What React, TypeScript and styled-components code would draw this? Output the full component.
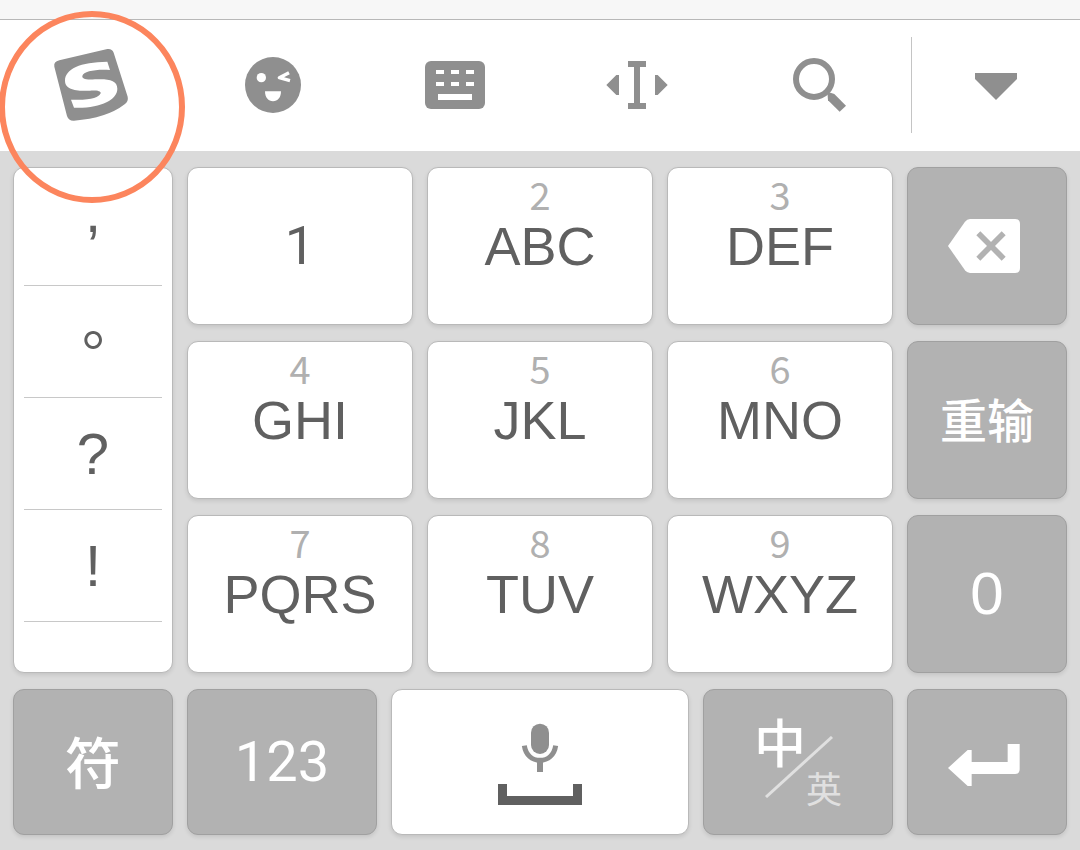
import React from "react";
import styled, { createGlobalStyle } from "styled-components";

const colors = {
  board: "#dadada",
  dark: "#b2b2b2",
  ink: "#606060",
  icon: "#8f8f8f",
  hint: "#b0b0b0",
  ring: "#fc855d",
};

const GlobalStyle = createGlobalStyle`
  *, *::before, *::after { box-sizing: border-box; }
  body {
    margin: 0;
    background: ${colors.board};
    font-family: "Liberation Sans", "Noto Sans CJK SC", sans-serif;
  }
  button {
    margin: 0;
    padding: 0;
    border: 0;
    background: none;
    font: inherit;
    color: inherit;
    cursor: pointer;
  }
  svg { display: block; flex: none; }
`;

const Keyboard = styled.main`
  display: flex;
  flex-direction: column;
  min-height: 100vh;
  overflow: hidden;
`;

const TopStrip = styled.div`
  height: 20px;
  background: #f7f7f7;
  border-bottom: 1px solid #b8b8b8;
`;

const Toolbar = styled.div`
  display: flex;
  align-items: stretch;
  height: 131px;
  background: #fff;
`;

const Tool = styled.button<{ $grow?: number }>`
  position: relative;
  display: flex;
  flex: ${(p) => p.$grow ?? 182} 1 0;
  align-items: center;
  justify-content: center;
  padding-bottom: 2px;
`;

const Divider = styled.div`
  width: 1px;
  margin: 17px 0 18px 1px;
  background: #c4c4c4;
`;

const Ring = styled.svg`
  position: absolute;
  z-index: 2;
  top: -11px;
  left: 50%;
  margin-left: -94px;
  pointer-events: none;
`;

const Board = styled.div`
  display: flex;
  flex: 1;
  flex-direction: column;
  gap: 16px;
  padding: 16px 13px 15px;
  background: ${colors.board};
`;

const MainKeys = styled.div`
  display: grid;
  grid-template-columns: minmax(0, 160fr) repeat(3, minmax(0, 226fr)) minmax(0, 160fr);
  grid-auto-rows: minmax(158px, auto);
  gap: 16px 14px;
`;

const BottomKeys = styled.div`
  display: grid;
  grid-template-columns:
    minmax(0, 160fr) minmax(0, 190fr) minmax(0, 298fr)
    minmax(0, 190fr) minmax(0, 160fr);
  grid-auto-rows: minmax(146px, auto);
  gap: 14px;
`;

const Key = styled.button<{ $dark?: boolean }>`
  display: flex;
  align-items: center;
  justify-content: center;
  border: 1px solid ${(p) => (p.$dark ? "#a0a0a0" : "#b9b9b9")};
  border-radius: 11px;
  background: ${(p) => (p.$dark ? colors.dark : "#fff")};
  color: ${(p) => (p.$dark ? "#fff" : colors.ink)};
  box-shadow: 0 2px 4px rgba(0, 0, 0, 0.1);
`;

const LetterKey = styled(Key)`
  flex-direction: column;
  justify-content: flex-start;
  padding-top: 10px;
`;

const Hint = styled.span`
  height: 40px;
  font-family: "Noto Sans CJK SC", sans-serif;
  font-size: 38px;
  line-height: 32px;
  color: ${colors.hint};
`;

const Letters = styled.span<{ $digit?: boolean }>`
  font-family: ${(p) => (p.$digit ? "Roboto" : '"Liberation Sans"')}, sans-serif;
  font-size: 54px;
  line-height: 56px;
`;

const Digits = styled.span`
  font-family: Roboto, sans-serif;
  font-size: 56px;
  line-height: 64px;
`;

const Zero = styled.span`
  font-size: 60px;
  line-height: 64px;
`;

const Hanzi = styled.span<{ $size: number }>`
  padding-bottom: 4px;
  font-family: "Noto Sans CJK SC", sans-serif;
  font-size: ${(p) => p.$size}px;
  font-weight: 500;
  line-height: 64px;
`;

const Punctuation = styled.div`
  grid-row: span 3;
  padding: 6px 10px 0;
  border: 1px solid #b9b9b9;
  border-radius: 11px;
  background: #fff;
  box-shadow: 0 2px 4px rgba(0, 0, 0, 0.1);
`;

const Mark = styled.button<{ $raised?: boolean }>`
  display: flex;
  align-items: center;
  justify-content: center;
  width: 100%;
  height: 112px;
  padding-bottom: ${(p) => (p.$raised ? 36 : 0)}px;
  border-bottom: 1px solid #c8c8c8;
  font-family: "Liberation Sans", "Noto Sans CJK TC", sans-serif;
  font-size: 58px;
  line-height: 64px;
  color: ${colors.ink};
`;

const LanguageSwitch = styled.span`
  position: relative;
  display: flex;
  flex-direction: column;
  width: 88px;
  height: 92px;
  font-family: "Noto Sans CJK SC", sans-serif;
`;

const Slash = styled.svg`
  position: absolute;
  top: 20px;
  left: 11px;
`;

const Chinese = styled.span`
  align-self: flex-start;
  font-size: 52px;
  font-weight: 500;
  line-height: 50px;
`;

const English = styled.span`
  align-self: flex-end;
  font-size: 36px;
  line-height: 42px;
  color: #e0e0e0;
`;

const LogoIcon = () => (
  <svg width="82" height="80" viewBox="150 135 246 240" aria-hidden="true">
    <path
      fill={colors.icon}
      d="M178 181L322 147Q336 145 341 158L383 290Q386 304 374 313Q320 355 222 362Q206 363 201 348L163 200Q160 185 178 181Z"
    />
    <path
      fill="#fff"
      d="M322 185C240 186 195 207 195 242C195 272 238 273 270 272C291 271 303 273 302 280C298 293 268 302 213 299L222 323C300 326 352 300 352 266C352 240 325 236 285 238C255 240 246 236 247 228C250 213 290 207 330 210Z"
    />
  </svg>
);

const SmileyIcon = () => (
  <svg width="56" height="56" viewBox="45 50 168 168" aria-hidden="true">
    <circle cx="129" cy="134" r="84" fill={colors.icon} />
    <circle cx="94" cy="112" r="14" fill="#fff" />
    <path d="M177 97L148 112L180 121" fill="none" stroke="#fff" strokeWidth="10" strokeLinejoin="round" />
    <path d="M105 153H153C153 172 143 183 129 183S105 172 105 153Z" fill="#fff" />
  </svg>
);

const KeyboardIcon = () => (
  <svg width="60" height="48" viewBox="0 0 60 48" aria-hidden="true">
    <rect width="60" height="48" rx="6" fill={colors.icon} />
    <path
      fill="#fff"
      d="M11 9h8v4h-8zM26 9h8v4h-8zM41 9h8v4h-8zM11 21h8v4h-8zM26 21h8v4h-8zM41 21h8v4h-8zM13 33h34v6H13z"
    />
  </svg>
);

const CursorIcon = () => (
  <svg width="62" height="48" viewBox="48 63 186 144" aria-hidden="true">
    <path
      fill={colors.icon}
      d="M49 135L79 105H87V165H79ZM233 135L203 105H195V165H203ZM114 63H168V81H150V189H168V207H114V189H132V81H114Z"
    />
  </svg>
);

const SearchIcon = () => (
  <svg width="53" height="54" viewBox="609 54 159 162" aria-hidden="true">
    <circle cx="672" cy="117" r="54" fill="none" stroke={colors.icon} strokeWidth="18" />
    <path fill={colors.icon} d="M712 155L733 162L768 197L749 215L714 181Z" />
  </svg>
);

const CollapseIcon = () => (
  <svg width="42" height="31" viewBox="0 -4 42 31" aria-hidden="true">
    <path fill={colors.icon} d="M0 0H42V6L21 27L0 6Z" />
  </svg>
);

const BackspaceIcon = () => (
  <svg width="78" height="54" viewBox="174 657 234 162" aria-hidden="true">
    <path
      fill="#fff"
      d="M174 738L225 665Q231 657 240 657H375Q390 657 390 672V804Q390 819 375 819H240Q231 819 225 811Z"
    />
    <path d="M265 700L341 776M341 700L265 776" stroke={colors.dark} strokeWidth="17" />
  </svg>
);

const EnterIcon = () => (
  <svg width="78" height="48" viewBox="745 174 234 144" aria-hidden="true">
    <path
      fill="#fff"
      d="M745 264L804 210H816V246H924V192H960V268Q960 282 946 282H816V318H804Z"
    />
  </svg>
);

const VoiceSpaceIcon = () => (
  <svg width="84" height="86" viewBox="84 87 252 258" aria-hidden="true">
    <rect x="183" y="101" width="54" height="91" rx="27" fill={colors.icon} />
    <path d="M163 167C167 195 186 211 210 211S253 195 257 167" fill="none" stroke={colors.icon} strokeWidth="15" />
    <path d="M201 210H219V246H201Z" fill={colors.icon} />
    <path d="M84 282H111V318H309V282H336V345H84Z" fill={colors.ink} />
  </svg>
);

const marks = [",", "。", "?", "!"];

const rows = [
  {
    keys: [["", "1"], ["2", "ABC"], ["3", "DEF"]],
    side: <Key $dark aria-label="退格"><BackspaceIcon /></Key>,
  },
  {
    keys: [["4", "GHI"], ["5", "JKL"], ["6", "MNO"]],
    side: <Key $dark><Hanzi $size={47}>重输</Hanzi></Key>,
  },
  {
    keys: [["7", "PQRS"], ["8", "TUV"], ["9", "WXYZ"]],
    side: <Key $dark><Zero>0</Zero></Key>,
  },
];

export default function App() {
  return (
    <>
      <GlobalStyle />
      <Keyboard>
        <TopStrip />
        <Toolbar role="toolbar">
          <Tool aria-label="搜狗">
            <LogoIcon />
            <Ring width="190" height="196" viewBox="0 0 190 196" aria-hidden="true">
              <ellipse cx="95" cy="98" rx="90" ry="93" fill="none" stroke={colors.ring} strokeWidth="6" />
            </Ring>
          </Tool>
          <Tool aria-label="表情"><SmileyIcon /></Tool>
          <Tool aria-label="键盘"><KeyboardIcon /></Tool>
          <Tool aria-label="光标"><CursorIcon /></Tool>
          <Tool aria-label="搜索"><SearchIcon /></Tool>
          <Divider />
          <Tool $grow={168} aria-label="收起"><CollapseIcon /></Tool>
        </Toolbar>
        <Board>
          <MainKeys>
            <Punctuation>
              {marks.map((mark) => (
                <Mark key={mark} $raised={mark === ","}>{mark}</Mark>
              ))}
            </Punctuation>
            {rows.map((row, i) => (
              <React.Fragment key={i}>
                {row.keys.map(([hint, letters]) => (
                  <LetterKey key={letters}>
                    <Hint>{hint}</Hint>
                    <Letters $digit={letters === "1"}>{letters}</Letters>
                  </LetterKey>
                ))}
                {row.side}
              </React.Fragment>
            ))}
          </MainKeys>
          <BottomKeys>
            <Key $dark><Hanzi $size={56}>符</Hanzi></Key>
            <Key $dark><Digits>123</Digits></Key>
            <Key aria-label="空格"><VoiceSpaceIcon /></Key>
            <Key $dark>
              <LanguageSwitch>
                <Chinese>中</Chinese>
                <Slash width="68" height="62" viewBox="0 0 68 62" aria-hidden="true">
                  <path d="M1 61L67 1" stroke="#e0e0e0" strokeWidth="3" />
                </Slash>
                <English>英</English>
              </LanguageSwitch>
            </Key>
            <Key $dark aria-label="换行"><EnterIcon /></Key>
          </BottomKeys>
        </Board>
      </Keyboard>
    </>
  );
}
